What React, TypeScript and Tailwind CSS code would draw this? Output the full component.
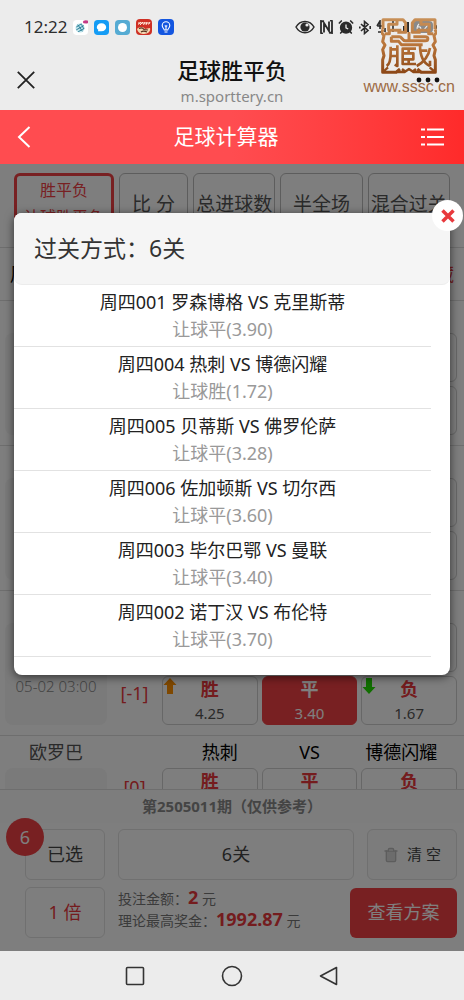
import { useState } from "react";
import { AlarmClock, Trash2 } from "lucide-react";

type Leg = { no: string; home: string; away: string; pick: string; odds: string };

const LEGS: Leg[] = [
  { no: "周四001", home: "罗森博格", away: "克里斯蒂", pick: "让球平", odds: "3.90" },
  { no: "周四004", home: "热刺", away: "博德闪耀", pick: "让球胜", odds: "1.72" },
  { no: "周四005", home: "贝蒂斯", away: "佛罗伦萨", pick: "让球平", odds: "3.28" },
  { no: "周四006", home: "佐加顿斯", away: "切尔西", pick: "让球平", odds: "3.60" },
  { no: "周四003", home: "毕尔巴鄂", away: "曼联", pick: "让球平", odds: "3.40" },
  { no: "周四002", home: "诺丁汉", away: "布伦特", pick: "让球平", odds: "3.70" },
];

type Match = {
  league: string;
  time: string;
  home: string;
  away: string;
  lines: { handicap: string; odds: [string, string, string]; picked?: number; moves?: ("up" | "down" | null)[] }[];
};

const MATCHES: Match[] = [
  {
    league: "挪超", time: "05-02 00:00", home: "罗森博格", away: "克里斯蒂",
    lines: [
      { handicap: "[0]", odds: ["1.60", "3.75", "4.30"] },
      { handicap: "[-1]", odds: ["2.80", "3.90", "1.98"] },
    ],
  },
  {
    league: "英超", time: "05-02 02:30", home: "诺丁汉", away: "布伦特",
    lines: [
      { handicap: "[0]", odds: ["2.20", "3.30", "2.75"] },
      { handicap: "[-1]", odds: ["4.40", "3.70", "1.60"] },
    ],
  },
  {
    league: "欧罗巴", time: "05-02 03:00", home: "毕尔巴鄂", away: "曼联",
    lines: [
      { handicap: "[0]", odds: ["2.05", "3.10", "3.15"] },
      { handicap: "[-1]", odds: ["4.25", "3.40", "1.67"], picked: 1, moves: ["up", null, "down"] },
    ],
  },
  {
    league: "欧罗巴", time: "05-02 03:00", home: "热刺", away: "博德闪耀",
    lines: [
      { handicap: "[0]", odds: ["1.35", "4.60", "6.10"] },
      { handicap: "[-1]", odds: ["1.72", "3.80", "3.60"] },
    ],
  },
];

const OUTCOMES = ["胜", "平", "负"];
const TABS = ["比 分", "总进球数", "半全场", "混合过关"];

function Arrow({ dir }: { dir: "up" | "down" }) {
  return (
    <svg
      viewBox="0 0 14 18"
      className={`absolute left-0 top-0 h-[18px] w-[14px] ${dir === "up" ? "fill-[#ff9000]" : "rotate-180 fill-[#22dd00]"}`}
    >
      <path d="M7 1 13.500 8H10v9H4V8H.5Z" />
    </svg>
  );
}

function StatusBar() {
  return (
    <div className="flex h-[54px] items-center justify-between pl-6">
      <div className="flex items-center gap-[6px]">
        <span className="text-[17px] text-[#2e2e2e]">12:22</span>
        <svg viewBox="0 0 16 16" className="h-[15px] w-[15px]">
          <rect width="16" height="16" rx="4" fill="#fff" />
          <circle cx="7.500" cy="8.500" r="4.800" fill="#bfe3ea" />
          <path d="M3.500 7.500 9 4M3.500 10.500 11.500 6M5.500 12.500 12 9M5 5l5 7M9 4.500l2.500 5" stroke="#287d96" strokeWidth="1" fill="none" />
          <ellipse cx="13.500" cy="2" rx="3" ry="1.800" fill="#c43a86" />
        </svg>
        <svg viewBox="0 0 16 16" className="h-[15px] w-[15px]">
          <rect width="16" height="16" rx="4" fill="#149cf5" />
          <path d="M8 3.500c3 0 5 1.900 5 4.300s-2 4.300-5 4.300H4.200l.4-1.600C3.600 9.800 3 8.900 3 7.800c0-2.400 2-4.300 5-4.300Z" fill="#fff" />
        </svg>
        <svg viewBox="0 0 16 16" className="h-[15px] w-[15px]">
          <rect width="16" height="16" rx="4" fill="#55abd3" />
          <circle cx="8" cy="8" r="4.800" fill="#fff" />
        </svg>
        <svg viewBox="0 0 16 16" className="h-4 w-4">
          <rect width="16" height="16" rx="4" fill="#cf3025" />
          <path d="M2 5.500 5 3M4 6l3-3M7.500 6 9 3M10 6l1-3M12.500 5.500 14 3M2 4h12" stroke="#ffe9d8" strokeWidth="1" />
          <path d="M1 10c3-3 7-2 8 0l5-1c1 3-2 6-6 6-3 0-6-1-7-5Z" fill="#f3d8b4" />
          <path d="M3 9.500c2-1 4-.5 5 1l4 .5M5 13c2-1.500 4-1 6 0" stroke="#57301c" strokeWidth="1.200" fill="none" />
        </svg>
        <svg viewBox="0 0 16 16" className="h-4 w-4">
          <rect width="16" height="16" rx="4" fill="#1456e0" />
          <path d="M6.300 11C6 9.600 4.200 8.800 4.200 6.500a3.800 3.800 0 0 1 7.600 0c0 2.300-1.800 3.100-2.100 4.500ZM6.500 13h3M8 11V7.500M6.800 6.500 8 7.600l1.200-1.100" stroke="#fff" strokeWidth="1.100" fill="none" />
        </svg>
      </div>
      <div className="flex items-center gap-[5px] pr-[26px] text-[#2b2b2b]">
        <svg viewBox="0 0 20 14" className="h-[14px] w-5">
          <path d="M1 7c4-7.500 14-7.500 18 0-4 7.500-14 7.500-18 0Z" fill="none" stroke="currentColor" strokeWidth="1.500" />
          <circle cx="10" cy="7" r="4.600" fill="currentColor" />
          <circle cx="12" cy="5" r="1.600" fill="#ececec" />
        </svg>
        <svg viewBox="0 0 13 14" className="h-[14px] w-[13px]">
          <path d="M4 12.500V3l5 8V1.500M4 1.500 1 1v12l2 .5M9 12.500l3 .5V1l-2-.5" fill="none" stroke="currentColor" strokeWidth="1.800" />
        </svg>
        <span className="relative flex">
          <AlarmClock className="h-4 w-4 fill-[#2b2b2b]" strokeWidth={2.5} />
          <svg viewBox="0 0 16 16" className="absolute inset-0 h-4 w-4 fill-none stroke-[#ececec]" strokeWidth="1.300">
            <path d="M8 5.500v3.300l2.200 1.200" />
          </svg>
        </span>
        <svg viewBox="0 0 12 15" className="h-[15px] w-3 fill-none stroke-[#2b2b2b]" strokeWidth="1.600">
          <path d="m2 4 7 6.500L5.500 13.500v-12L9 4.500 2 11M11.200 6v3M.8 6.500v2" />
        </svg>
        <svg viewBox="0 0 62 14" className="h-[14px] w-[62px]">
          <path d="M1 6 4 1v8M1 6h5M2 12h4M9 12V8M13 12V5M17 12V1" stroke="currentColor" strokeWidth="1.600" fill="none" />
          <path d="M24 12V9M28 12V6M32 12V2" stroke="currentColor" strokeWidth="2" />
          <rect x="36" y="1" width="21" height="12" rx="4" fill="#8a8a8a" />
          <rect x="59" y="5" width="2" height="4" rx="1" fill="currentColor" />
          <path d="M43 4c-2 2-3 6 0 6s2-4-1-3M48 5c1-2 4-1 3 1l-3 4h4" stroke="#ececec" strokeWidth="1.200" fill="none" />
        </svg>
      </div>
    </div>
  );
}

function SealMark() {
  return (
    <div className="pointer-events-none absolute right-[9px] top-[18px] flex flex-col items-center">
      <svg viewBox="0 0 166 168" className="h-[56px] w-[56px]" fill="none" stroke="url(#seal)" strokeWidth="9" strokeLinejoin="round">
        <defs>
          <linearGradient id="seal" gradientUnits="userSpaceOnUse" x1="0" y1="0" x2="0" y2="168">
            <stop offset="0" stopColor="#c89058" />
            <stop offset="0.500" stopColor="#b87338" />
            <stop offset="1" stopColor="#8b4616" />
          </linearGradient>
        </defs>
        <path d="M5 34V5h42v14H22v18h38M47 5h18l8 10v28H48M10 47h14v-8" />
        <path d="M161 34V5h-42v14h25v18h-38M119 5h-18l-8 10v28h25M156 47h-14v-8" />
        <path d="M5 34 1 44l7 9-4 18 7 10-7 14 4 18-4 12v38h40l12-10M161 34l4 10-7 9 4 18-7 10 7 14-4 18 4 12v38h-42l-12-10" />
        <path d="M5 162 20 148M44 162h26l13-9 13 9h25M161 162l-16-14M62 153l12 9M104 153l-12 9" strokeWidth="7" />
        <path d="M30 56h24c8 0 8 12 18 12h60c10 0 10-12 0-12H96M30 56v14h22l8 10h64M83 42v28" />
        <path d="M28 86v18c0 22-2 34-12 40M28 94h20M28 114h20M48 82v62l-8-4" strokeWidth="8" />
        <path d="M104 92H64v46h40M64 106h32v18H64M82 92v14M82 124v14" strokeWidth="8" />
        <path d="M116 80c0 34 8 54 30 64M146 90c-4 24-18 42-40 54M116 98h22M146 128v16" strokeWidth="8" />
      </svg>
      <span className="-mt-px font-['Liberation_Sans',sans-serif] text-[16px] leading-7 text-[#9c6b45]">www.sssc.cn</span>
    </div>
  );
}

function MatchBlock({ match }: { match: Match }) {
  return (
    <section className="grid grid-cols-[102px_55px_1fr] border-t border-[#dcdcdc] pb-[10px] pl-[5px] pr-[7px]">
      <h3 className="text-center text-[18px] leading-8 text-[#555]">{match.league}</h3>
      <span />
      <div className="grid grid-cols-3 gap-1 whitespace-nowrap text-center text-[18px] leading-8">
        <span className="pl-5">{match.home}</span>
        <span>VS</span>
        <span className="pr-4">{match.away}</span>
      </div>
      <div className="rounded-lg bg-[#f4f4f4] pt-[52px] text-center text-[15px] font-light text-[#888]">{match.time}</div>
      <div className="grid grid-rows-2 text-center text-[18px] text-[#e8393d]">
        {match.lines.map((line) => (
          <span key={line.handicap} className="pt-[6px]">{line.handicap}</span>
        ))}
      </div>
      <div className="flex flex-col gap-1">
        {match.lines.map((line) => (
          <div key={line.handicap} className="grid grid-cols-3 gap-1">
            {line.odds.map((odd, i) => {
              const picked = line.picked === i;
              const move = line.moves?.[i];
              return (
                <button
                  key={OUTCOMES[i]}
                  className={`relative flex h-[49px] flex-col items-center rounded-md border ${
                    picked ? "border-[#f04145] bg-[#f04145] text-white" : "border-[#cfcfcf] text-[#555]"
                  }`}
                >
                  {move && <Arrow dir={move} />}
                  <span className={`text-[18px] font-bold leading-6 ${picked ? "" : "text-[#e8393d]"}`}>{OUTCOMES[i]}</span>
                  <span className="text-[15px] leading-6">{odd}</span>
                </button>
              );
            })}
          </div>
        ))}
      </div>
    </section>
  );
}

function SlipBar() {
  return (
    <footer className="relative z-10 border-t border-[#dcdcdc] bg-[#fdfdfd] pb-[13px]">
      <p className="bg-[#fafafa] text-center text-[15px] font-bold leading-[33px] text-[#888]">第2505011期（仅供参考）</p>
      <div className="mt-[6px] flex flex-col gap-[7px] pl-[25px] pr-[7px]">
        <div className="flex h-[51px] gap-[13px]">
          <button className="relative w-[80px] shrink-0 rounded-md border border-[#e0e0e0] text-[18px] text-[#444]">
            已选
            <span className="absolute -left-5 -top-3 flex h-[38px] w-[38px] items-center justify-center rounded-full bg-[#f04145] text-white">6</span>
          </button>
          <button className="flex-1 rounded-md border border-[#e0e0e0] text-[18px] text-[#444]">6关</button>
          <button className="flex w-[90px] shrink-0 items-center justify-center gap-2 rounded-md border border-[#e0e0e0] bg-[#f8f8f8] text-[15px] text-[#444]">
            <Trash2 className="h-4 w-4 fill-[#d8d8d8] text-[#bbb]" />
            清 空
          </button>
        </div>
        <div className="flex h-[51px] items-center gap-[13px]">
          <button className="h-full w-[80px] shrink-0 rounded-md border border-[#e0e0e0] text-[18px] text-[#e8393d]">1 倍</button>
          <div className="flex-1 whitespace-nowrap pb-2 text-[14px] leading-[22px] text-[#777]">
            <p className="h-[22px]">投注金额：<b className="text-[18px] leading-5 text-[#e8393d]">2</b> 元</p>
            <p className="h-[22px]">理论最高奖金：<b className="text-[18px] leading-5 text-[#e8393d]">1992.87</b> 元</p>
          </div>
          <button className="h-[50px] w-[107px] shrink-0 rounded-md bg-[#f04145] text-[18px] text-white">查看方案</button>
        </div>
      </div>
    </footer>
  );
}

function PassDialog({ onClose }: { onClose: () => void }) {
  return (
    <div className="absolute inset-0 z-20 bg-black/50 px-[14px] pt-[49px]">
      <div role="dialog" aria-labelledby="pass-title" className="relative rounded-lg bg-white pb-[18px] shadow-[0_2px_10px_rgba(0,0,0,0.6)]">
        <button
          onClick={onClose}
          aria-label="关闭"
          className="absolute -right-[13px] -top-[13px] flex h-[31px] w-[31px] items-center justify-center rounded-full bg-white"
        >
          <svg viewBox="0 0 14 14" className="h-[14px] w-[14px] stroke-[#e8393d]" strokeWidth="3.500">
            <path d="m1.500 1.500 11 11m0-11-11 11" />
          </svg>
        </button>
        <h2 id="pass-title" className="rounded-lg border-b border-[#ececec] bg-[#f5f5f5] px-5 text-[23px] leading-[71px] text-[#333]">
          过关方式：6关
        </h2>
        <ul className="mr-[19px]">
          {LEGS.map((leg) => (
            <li key={leg.no} className="border-b border-[#e2e2e2] pb-[3px] pt-1 text-center text-[18px] leading-[27px]">
              <p className="text-[#222]">{leg.no} {leg.home} VS {leg.away}</p>
              <p className="text-[#999]">{leg.pick}({leg.odds})</p>
            </li>
          ))}
        </ul>
      </div>
    </div>
  );
}

export default function App() {
  const [open, setOpen] = useState(true);

  return (
    <div className="relative flex h-dvh flex-col overflow-hidden bg-[#ececec] font-['Noto_Sans','Noto_Sans_CJK_SC',sans-serif]">
      <StatusBar />

      {/* In-app browser title */}
      <div className="grid h-14 grid-cols-[60px_1fr_60px] items-center pb-[7px]">
        <button aria-label="关闭页面" className="pl-[17px]">
          <svg viewBox="0 0 18 18" className="h-[18px] w-[18px] stroke-[#222]" strokeWidth="1.800">
            <path d="m.8.8 16.400 16.400m0-16.400L.8 17.200" />
          </svg>
        </button>
        <div className="text-center">
          <h1 className="text-[22px] font-medium leading-8 text-[#111]">足球胜平负</h1>
          <p className="text-[15px] leading-5 text-[#888]">m.sporttery.cn</p>
        </div>
        <button aria-label="更多" className="pl-3">
          <svg viewBox="0 0 24 6" className="h-[6px] w-6 fill-[#111]">
            <circle cx="3" cy="3" r="2.400" />
            <circle cx="12" cy="3" r="2.400" />
            <circle cx="21" cy="3" r="2.400" />
          </svg>
        </button>
      </div>

      {/* Page header */}
      <header className="flex h-[54px] shrink-0 items-center justify-between bg-linear-to-r from-[#ff4c50] from-50% to-[#ff2a2a] pl-[17px] pr-5 text-white">
        <button aria-label="返回">
          <svg viewBox="0 0 14 22" className="h-[22px] w-[14px] fill-none stroke-white" strokeWidth="2">
            <path d="M12.500 1 2 11l10.500 10" />
          </svg>
        </button>
        <h2 className="text-[21px]">足球计算器</h2>
        <button aria-label="菜单">
          <svg viewBox="0 0 23 18" className="h-[18px] w-[23px] stroke-white" strokeWidth="2">
            <path d="M0 1.500h4M6 1.500h17M0 9h4M6 9h17M0 16.500h4M6 16.500h17" />
          </svg>
        </button>
      </header>

      <main className="relative flex min-h-0 flex-1 flex-col bg-[#fdfdfd]">
        <div className="min-h-0 flex-1 overflow-hidden">
          <nav className="grid grid-cols-[100px_69px_1fr_1fr_1fr] gap-[5px] px-[14px] pb-3 pt-[9px]">
            <button className="h-[62px] rounded-md border-3 border-[#f04145] text-[16px] leading-[27px] text-[#f04145]">
              胜平负
              <br />
              让球胜平负
            </button>
            {TABS.map((tab) => (
              <button key={tab} className="h-[62px] whitespace-nowrap rounded-md border border-[#bbb] text-[19px] text-[#555]">{tab}</button>
            ))}
          </nav>
          <div className="flex h-[53px] items-center justify-between border-t border-[#dcdcdc] px-[10px] text-[18px]">
            <span>周四 2025-05-01 共6场</span>
            <button className="text-[#e8393d]">隐藏</button>
          </div>
          {MATCHES.map((match) => (
            <MatchBlock key={match.home} match={match} />
          ))}
        </div>
        <SlipBar />
        {open && <PassDialog onClose={() => setOpen(false)} />}
      </main>

      {/* System navigation */}
      <div className="flex h-[49px] shrink-0 items-center justify-center gap-[76px]">
        <button aria-label="最近任务">
          <svg viewBox="0 0 20 20" className="h-5 w-5 fill-none stroke-[#333]" strokeWidth="1.600">
            <rect x="1.500" y="1.500" width="17" height="17" rx="1" />
          </svg>
        </button>
        <button aria-label="主屏幕">
          <svg viewBox="0 0 22 22" className="h-[22px] w-[22px] fill-none stroke-[#333]" strokeWidth="1.600">
            <circle cx="11" cy="11" r="9.500" />
          </svg>
        </button>
        <button aria-label="后退">
          <svg viewBox="0 0 20 20" className="h-5 w-5 fill-none stroke-[#333]" strokeWidth="1.600" strokeLinejoin="round">
            <path d="M17.500 1.500v17L1.500 10Z" />
          </svg>
        </button>
      </div>

      <SealMark />
    </div>
  );
}
